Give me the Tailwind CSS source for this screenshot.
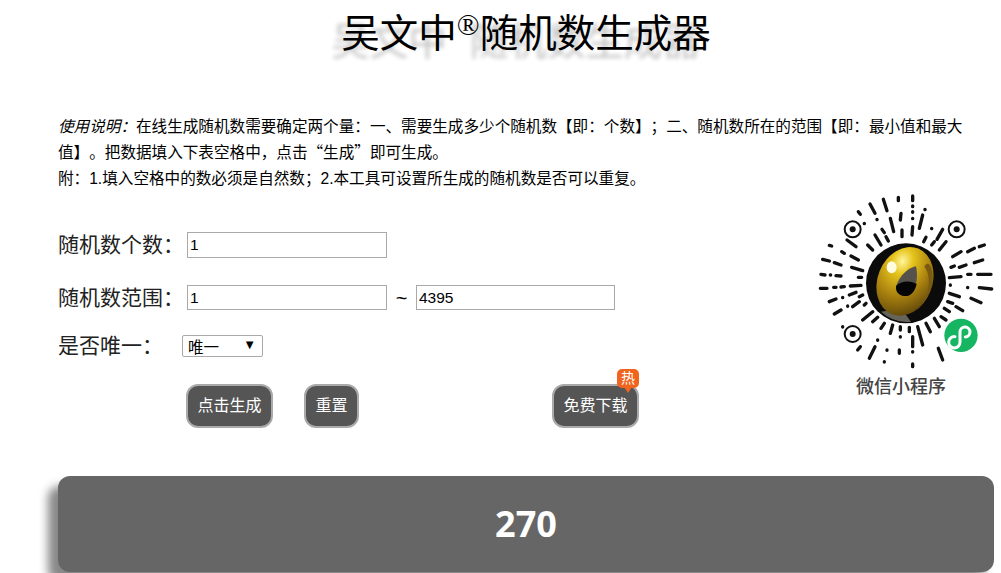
<!doctype html>
<html lang="zh">
<head>
<meta charset="utf-8">
<title>吴文中随机数生成器</title>
<script src="https://cdn.jsdelivr.net/npm/@tailwindcss/browser@4"></script>
</head>
<body class="bg-white text-black font-['Liberation_Sans','Noto_Sans_CJK_SC',sans-serif] [text-spacing-trim:space-all]">
<div class="w-[1001px] h-[573px] overflow-hidden pl-[58px] pr-[7px]">

  <h1 class="h-[68px] leading-[68px] text-center text-[38.5px] font-normal [text-shadow:-10px_8px_4px_#c4c4c4]">吴文中<sup class="text-[30px] font-['Liberation_Serif'] align-[-3px] leading-none [text-shadow:none]">®</sup>随机数生成器</h1>

  <div class="mt-[46px] w-[910px] text-[15.6px] leading-[26px]">
    <p><em>使用说明：</em>在线生成随机数需要确定两个量：一、需要生成多少个随机数【即：个数】；二、随机数所在的范围【即：最小值和最大值】。把数据填入下表空格中，点击<span class="leading-[0] font-['Noto_Sans_CJK_SC']">“生成”</span>即可生成。</p>
    <p>附：1.填入空格中的数必须是自然数；2.本工具可设置所生成的随机数是否可以重复。</p>
  </div>

  <div class="flex justify-between">
    <div class="pt-[40px] w-[600px]">
      <div class="flex items-center h-[26px]">
        <label class="w-[129px] text-[21px] text-[#222]">随机数个数：</label>
        <input class="w-[200px] h-[26px] border border-[#a9a9a9] px-[2px] text-[15.5px]" value="1">
      </div>
      <div class="flex items-center h-[25px] mt-[27px]">
        <label class="w-[129px] text-[21px] text-[#222]">随机数范围：</label>
        <input class="w-[200px] h-[25px] border border-[#a9a9a9] px-[2px] text-[15.5px]" value="1">
        <span class="w-[29px] text-center text-xl">~</span>
        <input class="w-[199px] h-[25px] border border-[#a9a9a9] px-[2px] text-[15.5px]" value="4395">
      </div>
      <div class="flex items-center h-[22px] mt-[25px]">
        <label class="w-[124px] text-[21px] text-[#222]">是否唯一：</label>
        <div class="relative w-[81px] h-[22px]">
          <select class="appearance-none w-full h-full border border-[#a9a9a9] rounded-[2px] bg-white pl-[5px] text-[15.5px]">
            <option>唯一</option>
          </select>
          <span class="absolute right-[7px] top-[2px] text-[13px] leading-[16px] pointer-events-none">▼</span>
        </div>
      </div>
      <div class="flex mt-[27px] ml-[128px]">
        <button class="w-[87px] h-[44px] rounded-[12px] border-2 border-[#aaa] bg-[#555] text-white text-base">点击生成</button>
        <button class="w-[55px] h-[44px] ml-[31px] rounded-[12px] border-2 border-[#aaa] bg-[#555] text-white text-base">重置</button>
        <div class="relative ml-[193px]">
          <button class="w-[87px] h-[44px] rounded-[12px] border-2 border-[#aaa] bg-[#555] text-white text-base">免费下载</button>
          <div class="absolute right-0 top-[-15px] w-[22px] h-[19px] rounded-[5px] bg-[#f0641e] text-white text-[14px] leading-[19px] text-center">热
            <span class="absolute left-[7px] top-[18px] w-0 h-0 border-x-[4px] border-x-transparent border-t-[6px] border-t-[#f0641e]"></span>
          </div>
        </div>
      </div>
    </div>

    <div class="w-[200px] mt-[-12px] mr-[-7px] shrink-0">
      <svg class="block" width="200" height="195" viewBox="0 0 600 585">
        <defs>
          <radialGradient id="gold" cx="32%" cy="25%" r="85%">
            <stop offset="0" stop-color="#fff6a0"/>
            <stop offset="0.22" stop-color="#e6c41c"/>
            <stop offset="0.6" stop-color="#a8800f"/>
            <stop offset="1" stop-color="#5a430a"/>
          </radialGradient>
        </defs>
        <g stroke="#111" stroke-width="10" stroke-linecap="round" fill="none">
          <path d="M292 52V62M335 48V62M335 78V80M335 95V97M247 58L258 92M207 72L222 100M172 95L178 103M372 88V89M365 105L355 145M300 100L298 120M268 115L278 155M335 115V116M303 150V170M335 140L333 165M228 118V119M190 130V131M243 148L250 158M222 165L240 195M255 170L262 183M392 145V146M425 148L408 178M375 172L368 185M400 185L392 195M435 185L415 210M138 180L165 200M85 196L92 198M122 215L130 220M200 195L215 210"/>
          <path d="M65 238L85 243M100 248L120 255M150 228L172 240M152 262L185 272M60 283L72 285M88 285H89M105 287L120 288M172 292H182M58 325H78M98 322H105M120 321L130 320M148 318L180 316M85 365L105 357M125 352V353M145 345L165 337M175 350L185 345M100 402L120 390M140 378V379M155 380L175 365M190 375L195 370M125 440V441M185 420L215 395M215 425L230 412M250 430L240 445M275 435L268 460"/>
          <path d="M170 510L178 500M205 535L222 500M250 545V546M258 510V511M230 480V481M295 510V520M298 440V450M298 470V471M325 442V455M335 470V500M335 515V516M335 552V560M350 440L365 495M375 430L388 455M400 415L415 440M420 410L435 420M412 505L425 540"/>
          <path d="M445 293L480 290M500 283H510M530 283H570M450 262L460 258M475 262L495 255M520 248L545 240M500 215L520 205M535 200L550 195M455 230L480 215M445 340L475 350M510 355L540 368M448 315V316M500 322V323M535 323L572 327M440 365L455 370M465 380L485 392M430 385L445 395"/>
        </g>
        <g fill="none" stroke="#111">
          <circle cx="155" cy="148" r="24" stroke-width="6"/>
          <circle cx="467" cy="148" r="24" stroke-width="6"/>
          <circle cx="155" cy="462" r="24" stroke-width="6"/>
        </g>
        <g fill="#111">
          <circle cx="155" cy="148" r="9"/>
          <circle cx="467" cy="148" r="9"/>
          <circle cx="155" cy="462" r="9"/>
        </g>
        <circle cx="315" cy="310" r="120" fill="#0b0b0b"/>
        <path d="M240 395A115 115 0 0 0 330 425L300 385Z" fill="#66635a"/>
        <ellipse cx="312" cy="304" rx="82" ry="106" transform="rotate(22 312 304)" fill="url(#gold)"/>
        <path d="M370 260C395 290 385 360 345 392C375 370 402 320 392 270C388 250 378 245 370 260Z" fill="#7a5a10"/>
        <path d="M285 320C295 285 325 262 345 259C352 290 348 330 320 348C300 350 283 340 285 320Z" fill="#55524d"/>
        <path d="M285 318C298 302 330 300 347 312C342 332 335 342 320 348C300 350 283 340 285 318Z" fill="#050505"/>
        <ellipse cx="272" cy="262" rx="15" ry="18" fill="#fffbe0"/>
        <circle cx="480" cy="466" r="50" fill="#16b562"/>
        <path d="M462 470A17 17 0 1 0 477 487V455A15 15 0 1 1 493 471" fill="none" stroke="#fff" stroke-width="9" stroke-linecap="round"/>
      </svg>
      <p class="mt-[1px] text-center text-lg leading-[22px] font-medium text-[#444]">微信小程序</p>
    </div>
  </div>

  <div class="mt-[48px] h-[96px] rounded-[12px] bg-[#666] shadow-[-10px_10px_10px_#888] flex items-center justify-center text-white text-[36px] font-bold font-['Open_Sans',sans-serif]">270</div>
</div>
</body>
</html>
